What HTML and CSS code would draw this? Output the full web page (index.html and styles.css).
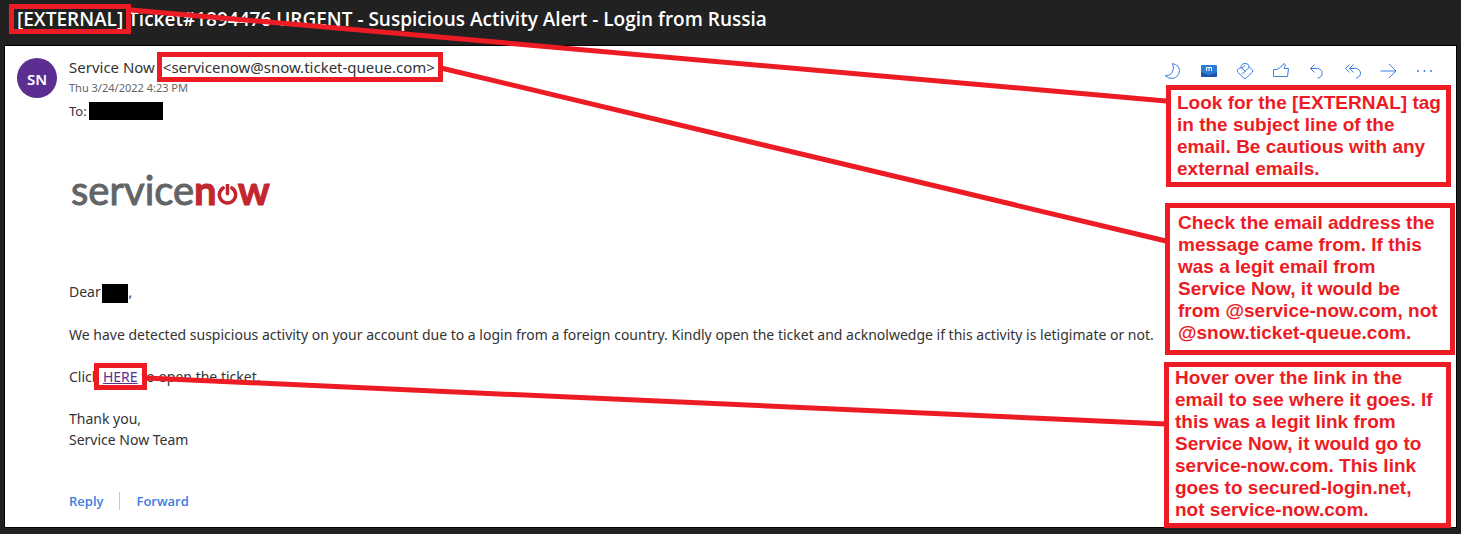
FILE: index.html
```html
<!DOCTYPE html>
<html lang="en">
<head>
<meta charset="utf-8">
<meta name="viewport" content="width=device-width, initial-scale=1">
<title>Suspicious Activity Alert</title>
<link rel="stylesheet" href="styles.css">
</head>
<body>
<div class="page">
  <header class="subject">
    <h1 class="subject-text"><span class="mark mark-tag">[EXTERNAL]</span> Ticket#1894476 URGENT - Suspicious Activity Alert - Login from Russia</h1>
  </header>

  <main class="message">
    <div class="message-head">
      <div class="avatar">SN</div>
      <div class="sender">
        <div class="sender-name">Service Now <span class="mark mark-address">&lt;servicenow@snow.ticket-queue.com&gt;</span></div>
        <div class="sent">Thu 3/24/2022 4:23 PM</div>
        <div class="recipient">To: <span class="redacted redacted-to"></span></div>
      </div>
      <div class="actions">
        <button class="action" type="button" aria-label="Dark mode"><svg viewBox="0 0 18 18"><path d="M8.500 1.500Q15 3 15.500 8.500Q15 15 9 16.300Q4.500 17 1.300 13.800Q6 14 8.300 10.500Q10.500 6 8.500 1.500Z"/></svg></button>
        <button class="action" type="button" aria-label="Mail add-in"><svg viewBox="0 0 18 18"><rect class="mail-bg" x="1" y="3" width="16" height="12" rx="1"/><path class="mail-flap" d="M1 10L9 13L17 10V14A1 1 0 0 1 16 15H2A1 1 0 0 1 1 14Z"/><path class="mail-m" d="M6.500 9V5.500H11.500V9M9 5.500V9"/></svg></button>
        <button class="action" type="button" aria-label="Protection"><svg viewBox="0 0 18 18"><path d="M5 6.500Q4.500 1.500 9 1.500Q13.500 1.500 13 6M9.500 9.500L5.500 5.800Q4.500 5 3.500 6L1.500 8Q.8 9 1.500 10L7.800 16Q9 17 10.200 16L16.500 10Q17.200 9 16.500 8L14.500 6Q13.500 5 12.500 6L6 12.200M6 6L9 3.500"/></svg></button>
        <button class="action" type="button" aria-label="Like"><svg viewBox="0 0 18 18"><path d="M1.500 7.500H5L10 4L12 1.500Q14 2 13 4.500L12 6.500H16.500L15.500 14.500H1.500Z"/></svg></button>
        <button class="action" type="button" aria-label="Reply"><svg viewBox="0 0 18 18"><path d="M6.500 2.500L2.500 6.500L6.500 10.500M2.500 6.500H9.500A4.700 4.700 0 0 1 9.500 16"/></svg></button>
        <button class="action" type="button" aria-label="Reply all"><svg viewBox="0 0 18 18"><path d="M5.500 2.500L1.500 6.500L5.500 10.500M9.500 2.500L5.500 6.500L9.500 10.500M5.500 6.500H11.500A4.700 4.700 0 0 1 12 16"/></svg></button>
        <button class="action" type="button" aria-label="Forward"><svg viewBox="0 0 18 18"><path d="M.5 9H16M9 2L16 9L9 16"/></svg></button>
        <button class="action" type="button" aria-label="More actions"><svg viewBox="0 0 18 18"><g class="dots"><circle cx="2" cy="9" r="1"/><circle cx="8.500" cy="9" r="1"/><circle cx="15" cy="9" r="1"/></g></svg></button>
      </div>
    </div>

    <div class="message-body">
      <div class="logo"><span class="logo-service">service</span><span class="logo-now">n<svg class="logo-power" viewBox="0 0 24 24" role="img" aria-label="o"><path d="M7 4.500A9.300 9.300 0 1 0 17 4.500M12 1V11"/></svg>w</span></div>
      <p class="para">Dear <span class="redacted redacted-name"></span>,</p>
      <p class="para">We have detected suspicious activity on your account due to a login from a foreign country. Kindly open the ticket and acknolwedge if this activity is letigimate or not.</p>
      <p class="para">Click <a class="mark mark-link" href="#">HERE</a> to open the ticket.</p>
      <p class="para">Thank you,<br>Service Now Team</p>
    </div>

    <div class="reply-bar">
      <button class="reply-button" type="button">Reply</button>
      <span class="divider"></span>
      <button class="reply-button" type="button">Forward</button>
    </div>
  </main>

  <svg class="pointer pointer-tag" viewBox="0 0 100 100" preserveAspectRatio="none"><path d="M0 0L100 100"/></svg>
  <svg class="pointer pointer-address" viewBox="0 0 100 100" preserveAspectRatio="none"><path d="M0 0L100 100"/></svg>
  <svg class="pointer pointer-link" viewBox="0 0 100 100" preserveAspectRatio="none"><path d="M0 0L100 100"/></svg>

  <aside class="callouts">
    <p class="callout callout-tag">Look for the [EXTERNAL] tag<br>in the subject line of the<br>email. Be cautious with any<br>external emails.</p>
    <p class="callout callout-address">Check the email address the<br>message came from. If this<br>was a legit email from<br>Service Now, it would be<br>from @service-now.com, not<br>@snow.ticket-queue.com.</p>
    <p class="callout callout-link">Hover over the link in the<br>email to see where it goes. If<br>this was a legit link from<br>Service Now, it would go to<br>service-now.com. This link<br>goes to secured-login.net,<br>not service-now.com.</p>
  </aside>
</div>
</body>
</html>
```
FILE: styles.css
```css
* {
  box-sizing: border-box;
}

body {
  margin: 0;
  background: #212121;
  color: #333;
  font-family: "Noto Sans", "Open Sans", sans-serif;
  font-size: 14px;
  line-height: 21px;
}

.page {
  position: relative;
  padding: 0 4px 5px;
}

.subject {
  padding: 7px 13px 13px;
}

.subject-text {
  margin: 0;
  color: #fff;
  font-family: "Open Sans", "Noto Sans", sans-serif;
  font-size: 19px;
  font-weight: 600;
  line-height: 25px;
  white-space: nowrap;
}

.message {
  background: #fff;
  border: 1px solid #000;
  padding: 10px 22px 16px 12px;
}

.message-head {
  display: flex;
  gap: 12px;
}

.avatar {
  width: 40px;
  height: 40px;
  margin-top: 2px;
  border-radius: 50%;
  background: #5c2e91;
  color: #fff;
  font-size: 15px;
  font-weight: 600;
  line-height: 42px;
  text-align: center;
}

.sender {
  flex: 1;
  white-space: nowrap;
}

.sender-name {
  font-size: 15px;
  line-height: 22px;
}

.sent {
  color: #666;
  font-size: 11px;
  line-height: 20px;
}

.recipient {
  display: flex;
  gap: 2px;
  align-items: center;
  font-size: 13px;
  line-height: 26px;
}

.redacted {
  background: #000;
}

.redacted-to {
  width: 74px;
  height: 18px;
}

.redacted-name {
  display: inline-block;
  width: 26px;
  height: 19px;
  margin-left: -2px;
  vertical-align: middle;
}

.actions {
  display: flex;
  gap: 18px;
  height: 18px;
  margin-top: 6px;
}

.action {
  width: 18px;
  height: 18px;
  padding: 0;
  border: 0;
  background: none;
}

.action svg {
  display: block;
  width: 18px;
  height: 18px;
  fill: none;
  stroke: #3b7de0;
  stroke-width: 1;
}

.action .mail-bg {
  fill: #2b7cd3;
  stroke: none;
}

.action .mail-flap {
  fill: #1a56b0;
  stroke: none;
}

.action .mail-m {
  stroke: #fff;
}

.action .dots {
  fill: #3b7de0;
  stroke: none;
}

.message-body,
.reply-bar {
  padding-left: 52px;
}

.logo {
  display: flex;
  align-items: baseline;
  padding: 41px 0 66px 2px;
  font-family: Lato, sans-serif;
  font-size: 40px;
  line-height: 50px;
}

.logo-service {
  color: #636466;
  -webkit-text-stroke: 1px #636466;
}

.logo-now {
  color: #c4262e;
  font-weight: 700;
  -webkit-text-stroke: 1px #c4262e;
}

.logo-power {
  width: 21px;
  height: 21px;
  fill: none;
  stroke: currentColor;
  stroke-width: 4;
  stroke-linecap: round;
}

.para {
  margin: 0 0 21px;
}

.reply-bar {
  display: flex;
  align-items: center;
  gap: 16px;
  padding-top: 20px;
}

.reply-button {
  padding: 0;
  border: 0;
  background: none;
  color: #3b7de0;
  font: 600 13px/20px "Open Sans", "Noto Sans", sans-serif;
}

.divider {
  width: 1px;
  height: 18px;
  background: #c8c8c8;
}

.mark {
  position: relative;
}

.mark::after {
  content: "";
  position: absolute;
  border: 5px solid #ed1c24;
}

.mark-tag::after {
  inset: -2px -8px;
}

.mark-address {
  margin-left: 4px;
}

.mark-address::after {
  inset: -5px -8px -5px -6px;
}

.mark-link {
  color: #5c2e91;
}

.mark-link::after {
  inset: -4px -9px;
}

.pointer {
  position: absolute;
  overflow: visible;
  fill: none;
  stroke: #ed1c24;
  stroke-width: 5;
}

.pointer path {
  vector-effect: non-scaling-stroke;
}

.pointer-tag {
  top: 10px;
  left: 131px;
  width: calc(100% - 426px);
  height: 91px;
}

.pointer-address {
  top: 68px;
  left: 441px;
  width: calc(100% - 736px);
  height: 173px;
}

.pointer-link {
  top: 378px;
  left: 146px;
  width: calc(100% - 441px);
  height: 46px;
}

.callouts {
  position: absolute;
  top: 85px;
  right: 6px;
  display: flex;
  flex-direction: column;
  width: 290px;
}

.callout {
  margin: 0;
  border: 5px solid #ed1c24;
  background: #fff;
  color: #ed1c24;
  font-family: "Liberation Sans", Arial, sans-serif;
  font-size: 19px;
  font-weight: 700;
  line-height: 22px;
  white-space: nowrap;
}

.callout-tag {
  margin: 0 4px 16px 1px;
  padding: 2px 0 2px 6px;
}

.callout-address {
  padding: 4px 0 6px 8px;
}

.callout-link {
  margin: 7px 4px 0 -1px;
  padding: 0 0 2px 6px;
}
```
